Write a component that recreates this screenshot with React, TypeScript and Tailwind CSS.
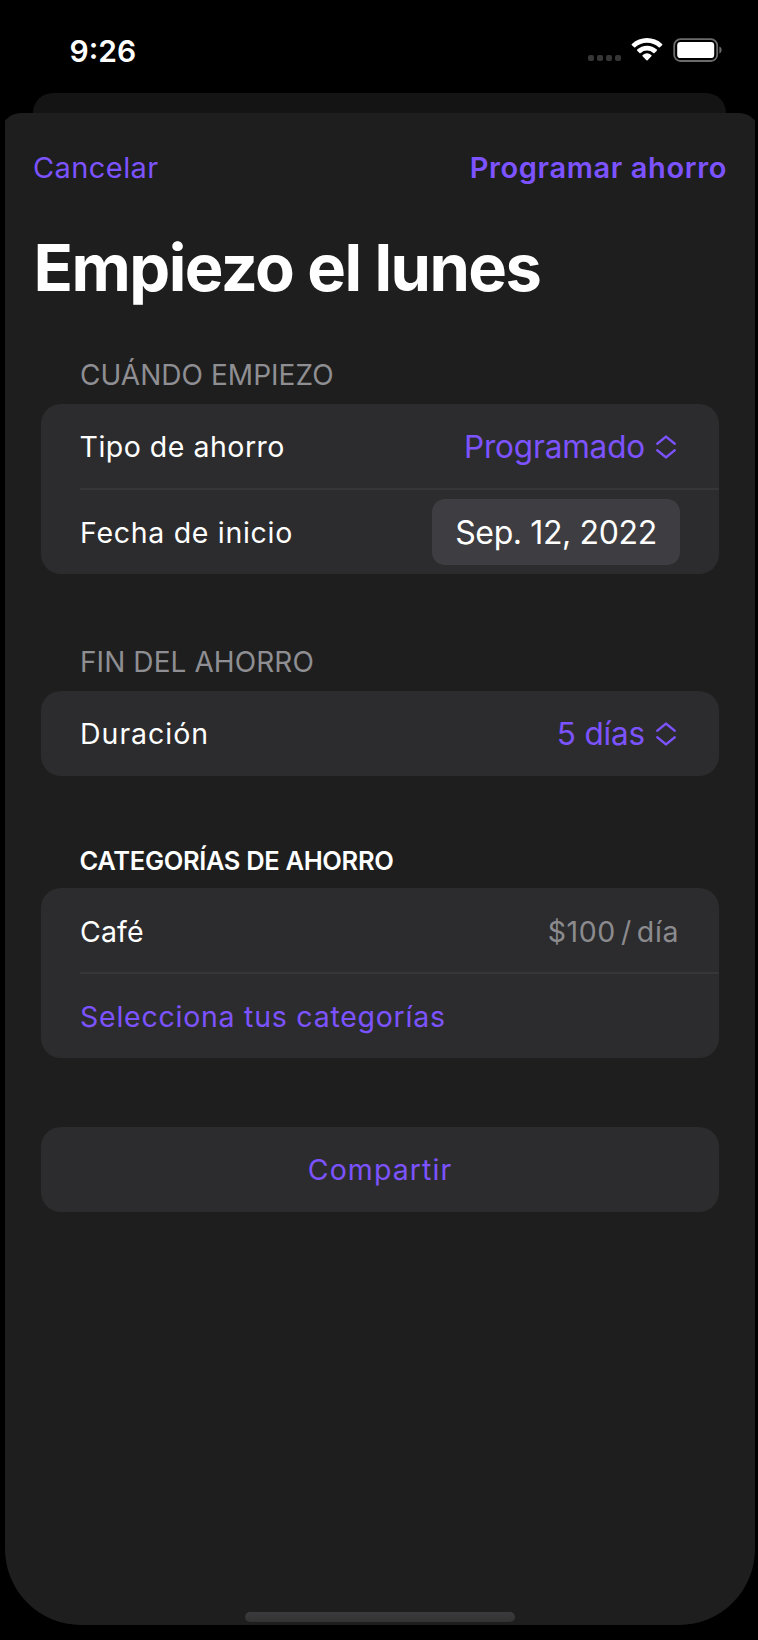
import type { ReactNode } from "react";

function SignalDots() {
  return (
    <div className="mt-[15px] flex gap-[3px]">
      {[0, 1, 2, 3].map((i) => (
        <span key={i} className="size-[6px] rounded-[2px] bg-[#363636]" />
      ))}
    </div>
  );
}

function WifiIcon() {
  return (
    <svg width="32" height="24" viewBox="0 0 32 24" className="ml-[10px]" fill="#fff">
      <path d="M0.9 7.2 Q0.3 6.5 0.9 5.9 A22.4 22.4 0 0 1 31.1 5.9 Q31.7 6.5 31.1 7.2 L28.9 9.3 Q28.3 9.9 27.7 9.3 A17.2 17.2 0 0 0 4.3 9.3 Q3.7 9.9 3.1 9.3 Z" />
      <path d="M6.2 12.7 Q5.6 12.1 6.2 11.5 A14.6 14.6 0 0 1 25.8 11.5 Q26.4 12.1 25.8 12.7 L23.5 14.9 Q22.9 15.5 22.3 14.9 A9.4 9.4 0 0 0 9.7 14.9 Q9.1 15.5 8.5 14.9 Z" />
      <path d="M11.6 18.2 Q11 17.6 11.7 17 A6.7 6.7 0 0 1 20.3 17 Q21 17.6 20.4 18.2 L16.6 22.3 Q16 22.9 15.4 22.3 Z" />
    </svg>
  );
}

function BatteryIcon() {
  return (
    <svg width="50" height="24" viewBox="0 0 50 24" className="ml-[10px]">
      <rect x="1.2" y="1.2" width="43" height="21.8" rx="6.2" fill="none" stroke="#6b6b6b" strokeWidth="1.8" />
      <rect x="4.2" y="4.1" width="37" height="16" rx="3.4" fill="#fff" />
      <path d="M46.4 8.6 C49.4 9.8 49.4 14.4 46.4 15.6 Z" fill="#6b6b6b" />
    </svg>
  );
}

function UpDownIcon() {
  return (
    <svg
      width="20"
      height="24"
      viewBox="0 0 20 24"
      className="ml-[11px]"
      fill="none"
      stroke="#7c53ff"
      strokeWidth="2.5"
      strokeLinecap="round"
      strokeLinejoin="round"
    >
      <path d="M1.4 8.6 L10 1.6 L18.6 8.6" />
      <path d="M1.4 15.4 L10 22.4 L18.6 15.4" />
    </svg>
  );
}

function Card({ className = "", children }: { className?: string; children: ReactNode }) {
  return (
    <div className={`mx-[36px] flex flex-col overflow-hidden rounded-[20px] bg-[#2c2c2e] ${className}`}>
      {children}
    </div>
  );
}

function Picker({ children }: { children: ReactNode }) {
  return (
    <button className="flex items-center text-[31.5px] tracking-[-0.16px] text-[#7c53ff]">
      {children}
      <UpDownIcon />
    </button>
  );
}

function Divider() {
  return <div className="ml-[38.5px] h-[2px] shrink-0 bg-[#363638]" />;
}

export default function App() {
  return (
    <div className="flex h-[1640px] w-[758px] flex-col overflow-hidden bg-black font-['Inter',sans-serif] leading-none whitespace-nowrap text-white">
      <div className="flex h-[93px] shrink-0 items-start justify-between pt-[38px] pr-[35px] pl-[69.5px]">
        <span className="text-[30px] leading-[26px] font-semibold">9:26</span>
        <div className="flex items-start">
          <div className="pt-[2px]">
            <SignalDots />
          </div>
          <WifiIcon />
          <BatteryIcon />
        </div>
      </div>

      <div className="mr-[32px] ml-[33px] h-[20px] shrink-0 rounded-t-[20px] bg-[#141414]" />

      <div className="mr-[3px] ml-[5px] h-[1512px] shrink-0 overflow-hidden rounded-b-[76px] bg-black">
        <div className="-mx-[4px] flex h-full flex-col rounded-t-[20px] bg-[#1e1e1e] px-[4px]">
          <div className="flex h-[109px] items-center justify-between pr-[28px] pl-[28px] text-[29px] text-[#7c53ff]">
            <button className="tracking-[0.42px]">Cancelar</button>
            <button className="font-semibold tracking-[0.63px]">Programar ahorro</button>
          </div>

          <h1 className="h-[91px] pl-[28.5px] text-[65px] leading-[91px] font-bold tracking-[-1.53px]">
            Empiezo el lunes
          </h1>

          <h2 className="mt-[46px] ml-[75px] h-[32px] text-[28px] leading-[32px] tracking-[0.04px] text-[#8e8e93]">
            CUÁNDO EMPIEZO
          </h2>
          <Card className="mt-[13px] h-[170px]">
            <div className="flex h-[84px] items-center justify-between pt-[2px] pr-[43px] pl-[38.5px]">
              <span className="pt-px text-[28.5px] tracking-[0.5px]">Tipo de ahorro</span>
              <Picker>Programado</Picker>
            </div>
            <Divider />
            <div className="flex h-[84px] items-center justify-between pr-[39px] pl-[39px]">
              <span className="pt-[2px] text-[28.5px] tracking-[0.7px]">Fecha de inicio</span>
              <button className="h-[66px] w-[248px] rounded-[13px] bg-[#3e3d41] pt-[2px] text-center text-[32px] tracking-[-0.38px]">
                Sep. 12, 2022
              </button>
            </div>
          </Card>

          <h2 className="mt-[72px] ml-[75px] h-[32px] text-[28px] leading-[32px] tracking-[0.08px] text-[#8e8e93]">
            FIN DEL AHORRO
          </h2>
          <Card className="mt-[13px] h-[85px]">
            <div className="flex h-[85px] items-center justify-between pt-px pr-[43px] pl-[39px]">
              <span className="pt-px text-[28.5px] tracking-[0.98px]">Duración</span>
              <Picker>5 días</Picker>
            </div>
          </Card>

          <h2 className="mt-[69px] ml-[74.5px] h-[32px] text-[25.5px] leading-[32px] font-semibold tracking-[-0.34px]">
            CATEGORÍAS DE AHORRO
          </h2>
          <Card className="mt-[11px] h-[170px]">
            <div className="flex h-[84px] items-center justify-between pt-[4px] pr-[40px] pl-[39px]">
              <span className="text-[28.5px] tracking-[0.12px]">Café</span>
              <span className="flex gap-[5px] text-[28.5px] tracking-[0.6px] text-[#8b8b8e]">
                <span>$100</span>
                <span>/</span>
                <span>día</span>
              </span>
            </div>
            <Divider />
            <div className="flex h-[84px] items-center pt-[3px] pl-[39px] text-[#7c53ff]">
              <span className="text-[28.5px] tracking-[0.75px]">Selecciona tus categorías</span>
            </div>
          </Card>

          <Card className="mt-[69px] h-[85px]">
            <button className="h-[85px] pt-[2px] text-center text-[28.5px] tracking-[1.07px] text-[#7c53ff]">
              Compartir
            </button>
          </Card>

          <div className="mt-auto mb-[3px] ml-[240px] h-[10px] w-[270px] shrink-0 rounded-full bg-linear-to-b from-[#3b3b3d] to-[#333334]" />
        </div>
      </div>
    </div>
  );
}
